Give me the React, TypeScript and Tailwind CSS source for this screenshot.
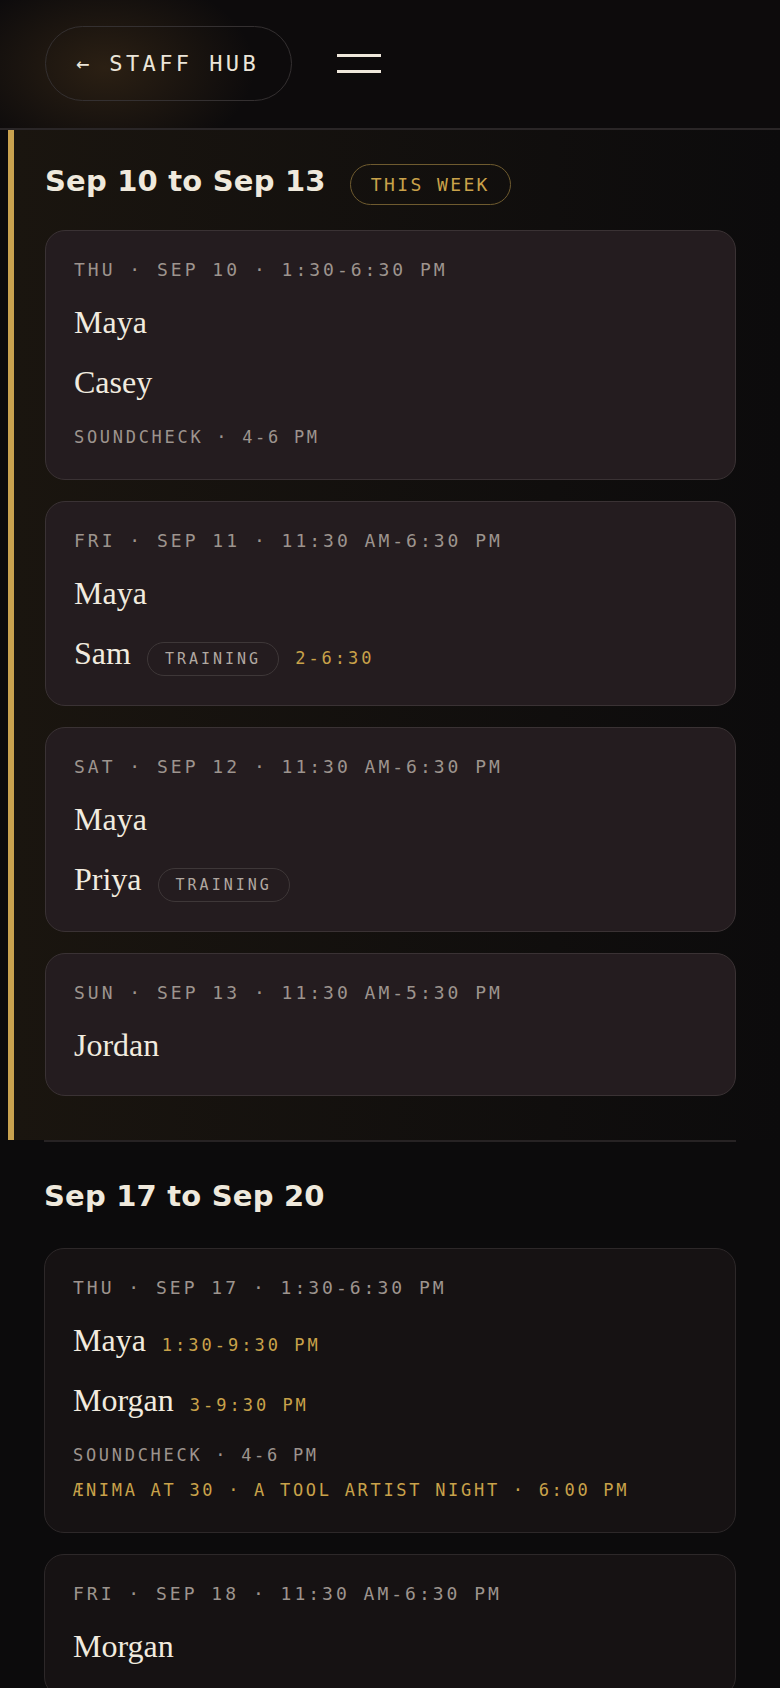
import React from 'react';

interface Staff {
  name: string;
  training?: boolean;
  time?: string;
}

interface Note {
  text: string;
  gold?: boolean;
}

interface Day {
  head: string;
  staff: Staff[];
  notes?: Note[];
}

interface Week {
  title: string;
  current?: boolean;
  days: Day[];
}

const weeks: Week[] = [
  {
    title: 'Sep 10 to Sep 13',
    current: true,
    days: [
      {
        head: 'THU · SEP 10 · 1:30-6:30 PM',
        staff: [{ name: 'Maya' }, { name: 'Casey' }],
        notes: [{ text: 'SOUNDCHECK · 4-6 PM' }],
      },
      {
        head: 'FRI · SEP 11 · 11:30 AM-6:30 PM',
        staff: [{ name: 'Maya' }, { name: 'Sam', training: true, time: '2-6:30' }],
      },
      {
        head: 'SAT · SEP 12 · 11:30 AM-6:30 PM',
        staff: [{ name: 'Maya' }, { name: 'Priya', training: true }],
      },
      {
        head: 'SUN · SEP 13 · 11:30 AM-5:30 PM',
        staff: [{ name: 'Jordan' }],
      },
    ],
  },
  {
    title: 'Sep 17 to Sep 20',
    days: [
      {
        head: 'THU · SEP 17 · 1:30-6:30 PM',
        staff: [
          { name: 'Maya', time: '1:30-9:30 PM' },
          { name: 'Morgan', time: '3-9:30 PM' },
        ],
        notes: [
          { text: 'SOUNDCHECK · 4-6 PM' },
          { text: 'ÆNIMA AT 30 · A TOOL ARTIST NIGHT · 6:00 PM', gold: true },
        ],
      },
      {
        head: 'FRI · SEP 18 · 11:30 AM-6:30 PM',
        staff: [{ name: 'Morgan' }],
      },
    ],
  },
];

const mono = "font-['DejaVu_Sans_Mono',monospace]";

function DayCard({ day, current }: { day: Day; current?: boolean }) {
  return (
    <div
      className={
        current
          ? 'flex flex-col gap-5 rounded-[20px] border-[1.5px] border-[#3a3234] bg-[#241c1f] px-[28px] pt-[27px] pb-[30px]'
          : 'flex flex-col gap-5 rounded-[20px] border-[1.5px] border-[#2d2829] bg-[#161213] px-[28px] pt-[27px] pb-[30px]'
      }
    >
      <div className={`${mono} text-[18px] leading-[24px] tracking-[3px] text-[#9d948e]`}>{day.head}</div>
      {day.staff.map((s, i) => (
        <div key={i} className={s.training ? 'flex h-[42px] items-baseline gap-4' : 'flex h-[40px] items-baseline gap-4'}>
          <span className="font-['Liberation_Serif',serif] text-[32px] leading-[40px] text-[#f1ebdf]">{s.name}</span>
          {s.training && (
            <span
              className={`${mono} rounded-full border-[1.5px] border-[#3e3738] px-[17px] py-[6px] text-[15px] leading-[20px] tracking-[3px] text-[#b1a8a1]`}
            >
              TRAINING
            </span>
          )}
          {s.time && (
            <span className={`${mono} text-[17px] leading-[24px] tracking-[3px] text-[#c9a24a]`}>{s.time}</span>
          )}
        </div>
      ))}
      {day.notes && (
        <div className="mt-[3px] flex flex-col gap-[11px]">
          {day.notes.map((n, i) => (
            <div
              key={i}
              className={
                n.gold
                  ? `${mono} text-[17px] leading-[24px] tracking-[2.7px] text-[#c9a24a]`
                  : `${mono} text-[17px] leading-[24px] tracking-[2.7px] text-[#9d948e]`
              }
            >
              {n.text}
            </div>
          ))}
        </div>
      )}
    </div>
  );
}

function WeekBlock({ week }: { week: Week }) {
  return (
    <>
      <div className={week.current ? 'mb-[25px] flex h-[41px] items-center gap-6' : 'mb-[28px] flex h-[41px] items-center gap-6'}>
        <h2 className="mb-[6px] font-['DejaVu_Sans',sans-serif] text-[29px] leading-[35px] font-bold tracking-[0.2px] text-[#efe9dc]">
          {week.title}
        </h2>
        {week.current && (
          <span
            className={`${mono} flex h-[41px] items-center rounded-full border-[1.5px] border-[#6f5b2f] px-[20px] text-[18px] tracking-[2.4px] text-[#c9a24a]`}
          >
            THIS WEEK
          </span>
        )}
      </div>
      <div className="flex flex-col gap-[21px]">
        {week.days.map((d, i) => (
          <DayCard key={i} day={d} current={week.current} />
        ))}
      </div>
    </>
  );
}

export default function App() {
  return (
    <div className="min-h-screen bg-[#0c0b0c]">
      {/* Header */}
      <header className="flex h-[130px] items-center gap-[45px] border-b-2 border-[#2a2627] bg-[#0d0b0c] bg-[radial-gradient(ellipse_150px_95px_at_105px_68px,rgba(150,105,45,0.22),transparent)] px-[45px] pb-[2px]">
        <button
          className={`${mono} flex h-[75px] items-center rounded-full border-[1.5px] border-[#343031] pl-[30px] pr-[32px] text-[22px] tracking-[3.4px] text-[#ebe5d9]`}
        >
          ← STAFF HUB
        </button>
        <div className="flex flex-col gap-[13px]">
          <span className="block h-[3px] w-[44px] bg-[#efe8dc]" />
          <span className="block h-[3px] w-[44px] bg-[#efe8dc]" />
        </div>
      </header>

      {/* This week */}
      <section className="ml-2 border-l-[6px] border-[#c9a24f] bg-gradient-to-r from-[#1a150f] to-[#0c0b0c] pt-[34px] pr-[44px] pb-[44px] pl-[31px]">
        <WeekBlock week={weeks[0]} />
      </section>

      {/* Next week */}
      <section className="px-[44px]">
        <div className="border-t-2 border-[#272324] pt-[37px] pb-10">
          <WeekBlock week={weeks[1]} />
        </div>
      </section>
    </div>
  );
}
